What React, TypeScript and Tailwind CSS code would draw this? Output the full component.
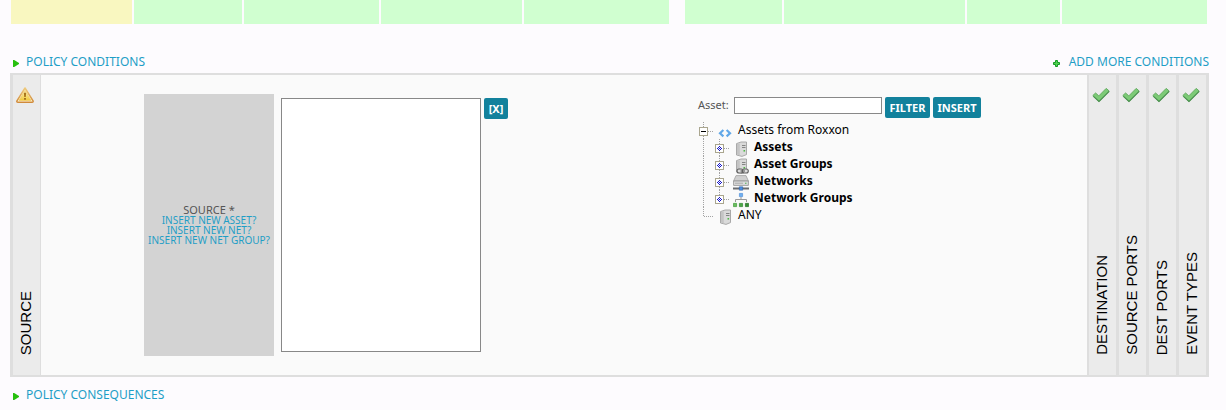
import { useState, type ReactNode } from 'react'
import clsx from 'clsx'

const topCells = [
    { grow: 121, color: 'bg-[#f9f7c0]', margin: '' },
    { grow: 108, color: 'bg-[#d0ffd0]', margin: 'ml-0.5' },
    { grow: 135, color: 'bg-[#d0ffd0]', margin: 'ml-0.5' },
    { grow: 141, color: 'bg-[#d0ffd0]', margin: 'ml-0.5' },
    { grow: 145, color: 'bg-[#d0ffd0]', margin: 'ml-0.5' },
    { grow: 97, color: 'bg-[#d0ffd0]', margin: 'ml-4' },
    { grow: 181, color: 'bg-[#d0ffd0]', margin: 'ml-0.5' },
    { grow: 93, color: 'bg-[#d0ffd0]', margin: 'ml-0.5' },
    { grow: 145, color: 'bg-[#d0ffd0]', margin: 'ml-0.5' },
]

const sections = ['DESTINATION', 'SOURCE PORTS', 'DEST PORTS', 'EVENT TYPES']

function Arrow() {
    return (
        <svg width="6" height="7" viewBox="0 0 6 7" className="mt-0.5 shrink-0">
            <path d="M0 0H1.2L6 3V4L1.2 7H0Z" fill="#27c00e" />
        </svg>
    )
}

function Plus() {
    return (
        <svg width="7" height="7" viewBox="0 0 7 7" className="mt-0.5 shrink-0">
            <path d="M2.5 .5h2v2h2v2h-2v2h-2v-2h-2v-2h2z" fill="#4fd24f" stroke="#159a25" strokeLinejoin="round" />
        </svg>
    )
}

function Warning() {
    return (
        <svg width="20" height="16" viewBox="0 0 20 16">
            <defs>
                <linearGradient id="warn" x1="0" y1="0" x2="0" y2="1">
                    <stop offset="0" stopColor="#fff3b8" />
                    <stop offset="1" stopColor="#f0c93a" />
                </linearGradient>
                <linearGradient id="warnEdge" x1="0" y1="0" x2="0" y2="1">
                    <stop offset="0" stopColor="#eeca7c" />
                    <stop offset="1" stopColor="#d08a3a" />
                </linearGradient>
            </defs>
            <path d="M9 1L17.2 14.2Q17.2 15.2 16.2 15.2H1.8Q.8 15.2 .8 14.2Z" fill="#fff6e0" stroke="url(#warnEdge)" strokeWidth="1.5" strokeLinejoin="round" />
            <path d="M9 3.4L15 13.4H3Z" fill="url(#warn)" stroke="#ecc550" strokeWidth=".6" />
            <path d="M7.9 5.8h2.2l-.3 4.2H8.2zM8 11h2v1.8H8z" fill="#a8741c" />
        </svg>
    )
}

function Check() {
    return (
        <svg width="20" height="16" viewBox="0 0 20 16">
            <path d="M.8 8.6L3.6 6L6.8 8.9L14.2 1.4L17.2 4L7 14.6Z" fill="#7ccb76" stroke="#65ad62" strokeLinejoin="round" />
            <path d="M1.4 9.4L7 14.4L17.2 4.3" fill="none" stroke="#4c9150" strokeWidth="1.1" />
        </svg>
    )
}

function ServerShape() {
    return (
        <>
            <path d="M3.5 2.6L8 1H13.5V13.6L9 15.4L3.5 14Z" fill="#dadada" stroke="#a2a2a2" strokeWidth=".9" strokeLinejoin="round" />
            <path d="M4 3L6.8 2.4V14.4L4 13.6Z" fill="#c4c4c4" />
            <path d="M9 4.5h3.5M9 6.5h3.5" stroke="#7c7c7c" strokeWidth=".9" />
            <path d="M10.5 9h1.6v1.6h-1.6z" fill="#4fb846" />
        </>
    )
}

function ServerIcon() {
    return (
        <svg width="16" height="16" viewBox="0 0 16 16">
            <ServerShape />
        </svg>
    )
}

function ServerGroupIcon() {
    return (
        <svg width="16" height="16" viewBox="0 0 16 16">
            <ServerShape />
            <g stroke="#606060" strokeWidth="1.1">
                <rect x="4" y="11" width="6" height="4" rx="2" fill="#ddd" />
                <rect x="9.3" y="11" width="6" height="4" rx="2" fill="#ddd" />
                <path d="M7.5 13h4.5" />
            </g>
        </svg>
    )
}

function NetworkIcon() {
    return (
        <svg width="16" height="16" viewBox="0 0 16 16">
            <path d="M3 .6h10l2.4 5.4H.6z" fill="#d0d0d0" stroke="#a0a0a0" strokeWidth=".8" />
            <path d="M.6 6h14.8v4.4H.6z" fill="#dcdcdc" stroke="#8f8f8f" strokeWidth=".8" />
            <path d="M2 8.2h8" stroke="#aaa" />
            <path d="M12 7.7h1.5v1H12z" fill="#4caf50" />
            <path d="M0 12.5h16v2H0z" fill="#6a6d70" />
            <path d="M6.3 11.8h3.4v3.4H6.3z" fill="#4c8de0" stroke="#2f62a8" strokeWidth=".6" />
        </svg>
    )
}

function NetworkGroupIcon() {
    return (
        <svg width="16" height="16" viewBox="0 0 16 16">
            <path d="M8 5v3M2.5 10V7.5h11V10" fill="none" stroke="#999" />
            <path d="M6.4 1.4h3.2v3.2H6.4z" fill="#6fb0f2" stroke="#5590d8" strokeWidth=".7" />
            <path d="M.4 11.4h3.2v3.2H.4z" fill="#6abf5d" stroke="#3f9a3a" strokeWidth=".7" />
            <path d="M6.4 11.4h3.2v3.2H6.4z" fill="#4ba845" stroke="#2f8430" strokeWidth=".7" />
            <path d="M12.4 11.4h3.2v3.2h-3.2z" fill="#358f34" stroke="#237024" strokeWidth=".7" />
        </svg>
    )
}

function CodeIcon() {
    return (
        <svg width="16" height="16" viewBox="0 0 16 16">
            <path d="M6.4 6L3 9.2L6.4 12.4M9.6 6L13 9.2L9.6 12.4" fill="none" stroke="#62a8e8" strokeWidth="2.2" />
        </svg>
    )
}

// dotted guide line in front of a tree row, with an optional expander box
function Guide({ kind }: { kind: 'open' | 'closed' | 'pipe' | 'last' | 'lastClosed' }) {
    const box = kind === 'open' || kind === 'closed' || kind === 'lastClosed'
    const half = kind === 'last' || kind === 'lastClosed'
    return (
        <svg width="16" height="17" viewBox="0 0 16 17" className="shrink-0">
            <path d={half ? 'M5.5 0V10' : 'M5.5 0V17'} stroke="#a3a3a3" strokeDasharray="1 1" />
            {kind !== 'pipe' && <path d="M6 9.5H16" stroke="#a3a3a3" strokeDasharray="1 1" />}
            {box && <rect x="1.5" y="5.5" width="8" height="8" fill="#fff" stroke="#aaa68f" />}
            {kind === 'open' && <path d="M3 9.5h5" stroke="#000" />}
            {(kind === 'closed' || kind === 'lastClosed') && (
                <path
                    d="M5 7h1v1h-1zM4 8h1v1h-1zM6 8h1v1h-1zM3 9h1v1h-1zM5 9h1v1h-1zM7 9h1v1h-1zM4 10h1v1h-1zM6 10h1v1h-1zM5 11h1v1h-1z"
                    fill="#1414c8"
                />
            )}
        </svg>
    )
}

const children = [
    { label: 'Assets', icon: <ServerIcon /> },
    { label: 'Asset Groups', icon: <ServerGroupIcon /> },
    { label: 'Networks', icon: <NetworkIcon /> },
    { label: 'Network Groups', icon: <NetworkGroupIcon /> },
]

function TreeRow({ guides, icon, children }: { guides: ReactNode; icon: ReactNode; children: ReactNode }) {
    return (
        <div className="flex h-[17px] items-start leading-[15px] text-black">
            {guides}
            <span className="mt-0.5 ml-[3px] w-[21px] shrink-0">{icon}</span>
            {children}
        </div>
    )
}

function AssetTree() {
    return (
        <ul className="mt-1 text-[12px]">
            <li>
                <TreeRow guides={<Guide kind="open" />} icon={<CodeIcon />}>
                    Assets from Roxxon
                </TreeRow>
                <ul>
                    {children.map((item, i) => (
                        <li key={item.label} className="font-bold">
                            <TreeRow
                                guides={
                                    <>
                                        <Guide kind="pipe" />
                                        <Guide kind={i === children.length - 1 ? 'lastClosed' : 'closed'} />
                                    </>
                                }
                                icon={item.icon}
                            >
                                {item.label}
                            </TreeRow>
                        </li>
                    ))}
                </ul>
            </li>
            <li>
                <TreeRow guides={<Guide kind="last" />} icon={<ServerIcon />}>
                    ANY
                </TreeRow>
            </li>
        </ul>
    )
}

function ActionButton({ children, className, onClick }: { children: ReactNode; className?: string; onClick?: () => void }) {
    return (
        <button
            type="button"
            onClick={onClick}
            className={clsx('h-[21px] shrink-0 rounded-xs bg-[#12819c] text-center text-[11px] leading-[21px] font-bold text-white', className)}
        >
            {children}
        </button>
    )
}

function SectionTab({ label, icon, className }: { label: string; icon: ReactNode; className?: string }) {
    return (
        <button type="button" className={clsx('flex shrink-0 flex-col items-center justify-between bg-[#ebebeb] pt-3 pr-0.5 pb-5', className)}>
            {icon}
            <span className="rotate-180 font-['Liberation_Sans',Arial,sans-serif] text-[15px] leading-[17px] whitespace-nowrap text-black [writing-mode:vertical-rl]">
                {label}
            </span>
        </button>
    )
}

export default function App() {
    const [asset, setAsset] = useState('')

    return (
        <div className="min-h-screen bg-[#fdfbfe] pr-[17px] pl-2.5 font-['Noto_Sans','Open_Sans',sans-serif] text-[12px] text-[#555]">
            <div className="flex h-6 pr-0.5 pl-px">
                {topCells.map((cell, i) => (
                    <div key={i} className={clsx('basis-0', cell.color, cell.margin)} style={{ flexGrow: cell.grow }} />
                ))}
            </div>

            {/* Conditions */}
            <div className="mt-[29px] flex items-center justify-between pb-0.5 leading-[18px] text-[#1f9ec6]">
                <a href="#conditions" className="flex items-center gap-[7px] pl-[3px]">
                    <Arrow />
                    POLICY CONDITIONS
                </a>
                <a href="#add" className="flex items-center gap-[9px]">
                    <Plus />
                    ADD MORE CONDITIONS
                </a>
            </div>

            <div className="flex border-x-[3px] border-y-2 border-[#dedede] bg-[#fafafa]">
                <SectionTab label="SOURCE" icon={<Warning />} className="w-7 border-r border-[#dedede]" />

                <div className="grid flex-1 grid-cols-[657fr_389fr] pt-[19px] pb-[19px]">
                    <div className="flex items-start pl-[103px]">
                        <div className="flex h-[262px] w-[130px] shrink-0 flex-col items-center justify-center bg-[#d3d3d3] text-[10px] leading-[10px] whitespace-nowrap">
                            <label htmlFor="sources" className="text-[11px] leading-[10px]">SOURCE *</label>
                            <a href="#asset" className="text-[#1f9ec6]">INSERT NEW ASSET?</a>
                            <a href="#net" className="text-[#1f9ec6]">INSERT NEW NET?</a>
                            <a href="#netgroup" className="text-[#1f9ec6]">INSERT NEW NET GROUP?</a>
                        </div>
                        <select id="sources" multiple className="mt-1 ml-[7px] h-[254px] w-[200px] shrink-0 border border-[#888] bg-white" />
                        <ActionButton className="mt-1 ml-[3px] w-6">[X]</ActionButton>
                    </div>

                    <div className="pt-[3px]">
                        <div className="flex items-start gap-[3px]">
                            <label htmlFor="asset" className="w-[33px] text-[11px] leading-[15px]">
                                Asset:
                            </label>
                            <input
                                id="asset"
                                type="text"
                                value={asset}
                                onChange={e => setAsset(e.target.value)}
                                className="h-[17px] w-[148px] border border-[#888] bg-white px-1 text-[11px]"
                            />
                            <ActionButton className="w-[45px]">FILTER</ActionButton>
                            <ActionButton className="w-12" onClick={() => setAsset('')}>INSERT</ActionButton>
                        </div>
                        <AssetTree />
                    </div>
                </div>

                {sections.map((label, i) => (
                    <SectionTab
                        key={label}
                        label={label}
                        icon={<Check />}
                        className={i === 0 ? 'w-[29px] border-l-2 border-[#dedede]' : 'w-[30px] border-l-[3px] border-[#dedede]'}
                    />
                ))}
            </div>

            {/* Consequences */}
            <div className="mt-[9px] flex leading-[18px] text-[#1f9ec6]">
                <a href="#consequences" className="flex items-center gap-[7px] pl-[3px]">
                    <Arrow />
                    POLICY CONSEQUENCES
                </a>
            </div>
        </div>
    )
}
